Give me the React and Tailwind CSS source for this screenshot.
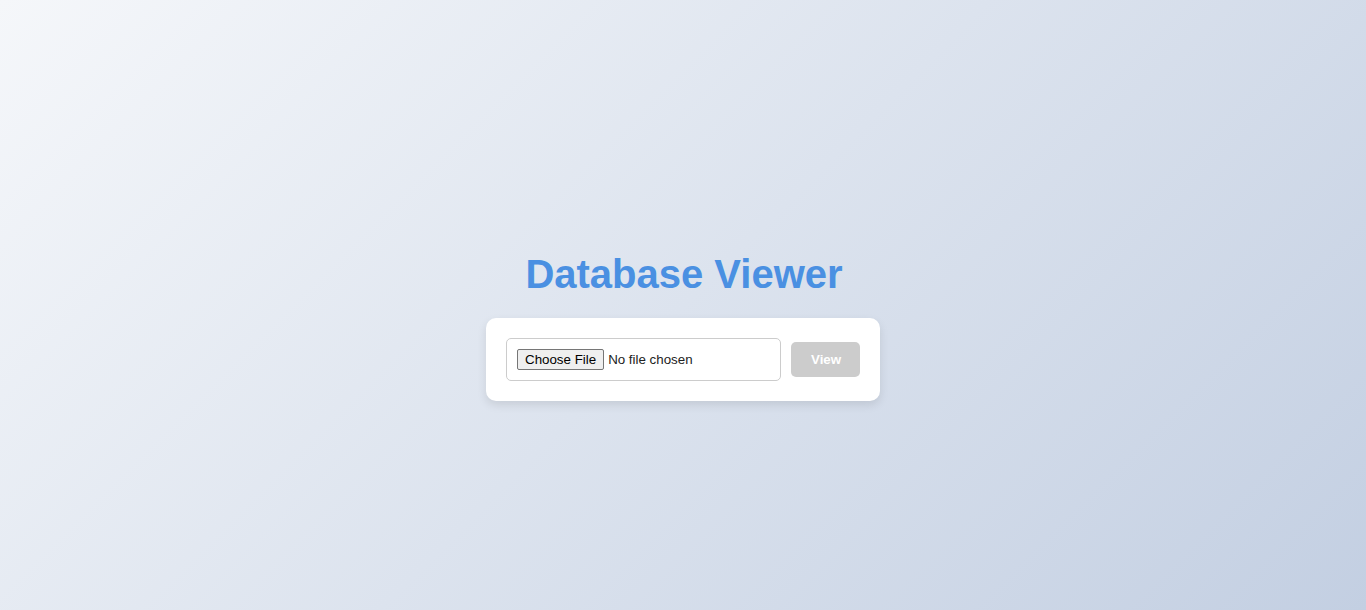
export default function App() {
  return (
    <div className="w-full h-[610px] flex flex-col items-center justify-center pt-[42px] bg-[linear-gradient(135deg,#f5f7fa_0%,#c3cfe2_100%)] font-['Liberation_Sans',Arial,sans-serif]">
      <h1 className="text-[40px] leading-[46px] font-bold text-[#4a90e2] m-0 ml-[2px]">Database Viewer</h1>
      <div className="mt-[21px] bg-white rounded-[10px] shadow-[0_4px_10px_rgba(0,0,0,0.1)] p-5 flex items-center gap-[10px] w-[394px]">
        <input
          type="file"
          className="w-[275px] h-[43px] px-[10px] py-[10px] border border-[#ccc] rounded-[5px] text-[13.33px] leading-normal text-[#222] bg-white font-['Liberation_Sans',Arial,sans-serif] file:font-['Liberation_Sans',Arial,sans-serif] file:text-[13.33px] file:text-black file:bg-[#efefef] file:border file:border-solid file:border-[#767676] file:rounded-[2px] file:px-[7px] file:py-[1px] file:mr-[4px] file:leading-[17px]"
        />
        <button
          disabled
          className="bg-[#ccc] text-white font-bold text-[13.33px] px-5 h-[35px] rounded-[5px] w-[69px] font-['Liberation_Sans',Arial,sans-serif]"
        >
          View
        </button>
      </div>
    </div>
  );
}
